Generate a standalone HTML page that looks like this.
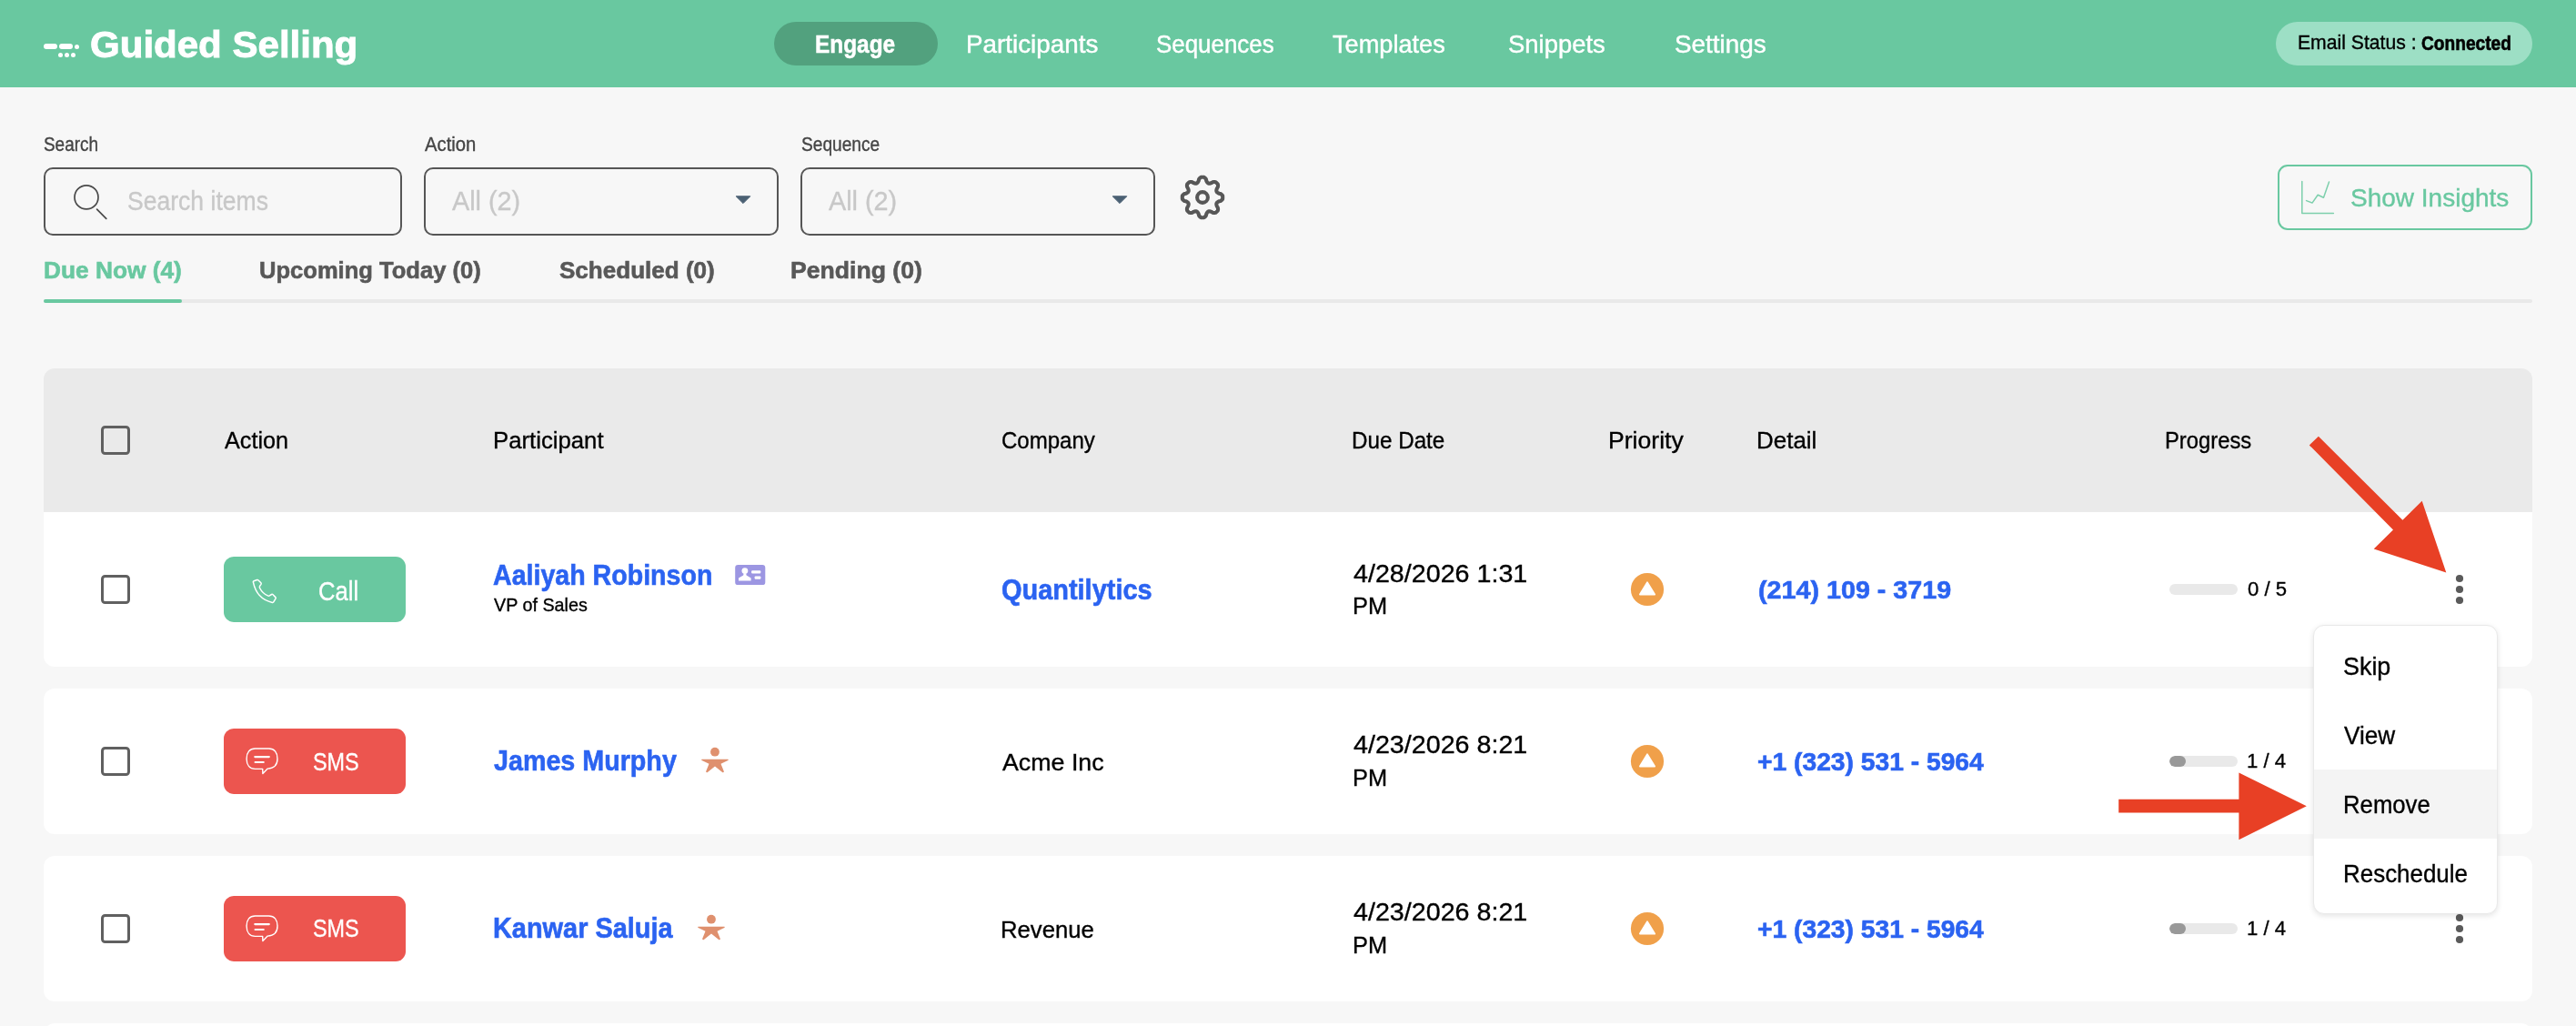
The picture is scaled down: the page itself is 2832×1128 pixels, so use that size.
<!DOCTYPE html>
<html lang="en">
<head>
<meta charset="utf-8">
<title>Guided Selling - Engage</title>
<style>
html,body{margin:0;padding:0}
body{width:2832px;height:1128px;overflow:hidden;background:#F7F7F7;font-family:"Liberation Sans",sans-serif;position:relative}
/* every piece is pinned to measured pixel coordinates of the 2832x1128 reference */
.a{position:absolute;display:block}
.t{position:absolute;display:block;white-space:nowrap;line-height:1;transform-origin:0 0}
header{position:absolute;left:0;top:0;width:2832px;height:96px;background:#69C8A0}
.pill{position:absolute;top:24px;height:48px;border-radius:24px}
.engage{left:851px;width:180px;background:#52A17E}
.status{left:2502px;width:282px;background:#9DDFC5}
.logo i{position:absolute;background:#fff;border-radius:3px;display:block}
.field{position:absolute;top:184px;height:71px;border:2px solid #565656;border-radius:10px;box-sizing:content-box}
.insights{position:absolute;left:2504px;top:181px;width:276px;height:68px;border:2px solid #69C8A0;border-radius:11px}
.tabline{position:absolute;left:48px;top:329px;width:2736px;height:4px;border-radius:2px;background:#E9E9E9}
.tabline b{position:absolute;left:0;top:0;width:152px;height:4px;border-radius:2px;background:#69C8A0;display:block}
.thead{position:absolute;left:48px;top:405px;width:2736px;height:158px;background:#EAEAEA;border-radius:12px 12px 0 0}
.row{position:absolute;left:48px;width:2736px;background:#fff;border-radius:12px}
.cb{position:absolute;width:26px;height:26px;border:3px solid #606060;border-radius:4.5px}
.btn{position:absolute;left:246px;width:200px;height:72px;border-radius:11px}
.call{background:#69C8A0}
.sms{background:#EC554F}
.pb{position:absolute;left:2385px;width:75px;height:12px;border-radius:6px;background:#E9E9E9;overflow:hidden}
.pf{height:12px;border-radius:6px;background:#999}
.menu{position:absolute;left:2543px;top:687px;width:201px;height:316px;background:#fff;border:1px solid #E9E9E9;border-radius:12px;box-shadow:0 2px 6px rgba(0,0,0,.11)}
.menu .hl{position:absolute;left:0;top:158px;width:201px;height:76px;background:#F4F4F4}
</style>
</head>
<body>

<!-- ===== top bar ===== -->
<header>
  <div class="logo">
    <i style="left:48px;top:48.3px;width:14.8px;height:5.5px"></i>
    <i style="left:64.9px;top:48.3px;width:14.8px;height:5.5px"></i>
    <i style="left:82px;top:48.6px;width:5px;height:5px"></i>
    <i style="left:64px;top:58.3px;width:4.8px;height:4.8px"></i>
    <i style="left:71.1px;top:58.3px;width:4.8px;height:4.8px"></i>
    <i style="left:78.4px;top:58.3px;width:4.8px;height:4.8px"></i>
    <span class="t" style="left:98.9px;top:29.0px;font-size:40.67px;color:#fff;transform:scaleX(1.034);font-weight:700;-webkit-text-stroke:0.9px #fff">Guided Selling</span>
  </div>
  <nav>
    <div class="pill engage"></div>
    <span class="t" style="left:896.1px;top:34.7px;font-size:27.6px;color:#fff;transform:scaleX(0.885);font-weight:700;-webkit-text-stroke:0.5px #fff">Engage</span>
<span class="t" style="left:1062.0px;top:34.7px;font-size:27.6px;color:#fff;transform:scaleX(1.008);-webkit-text-stroke:0.45px #fff">Participants</span>
<span class="t" style="left:1270.9px;top:34.7px;font-size:27.6px;color:#fff;transform:scaleX(0.939);-webkit-text-stroke:0.45px #fff">Sequences</span>
<span class="t" style="left:1465.4px;top:34.7px;font-size:27.6px;color:#fff;transform:scaleX(0.984);-webkit-text-stroke:0.45px #fff">Templates</span>
<span class="t" style="left:1657.7px;top:34.7px;font-size:27.6px;color:#fff;transform:scaleX(0.994);-webkit-text-stroke:0.45px #fff">Snippets</span>
<span class="t" style="left:1840.8px;top:34.7px;font-size:27.6px;color:#fff;transform:scaleX(1.011);-webkit-text-stroke:0.45px #fff">Settings</span>
  </nav>
  <div class="pill status"></div>
  <span class="t" style="left:2526.0px;top:36.3px;font-size:21.79px;color:#000;transform:scaleX(0.972);-webkit-text-stroke:0.35px #000">Email Status :</span>
<span class="t" style="left:2661.5px;top:37.3px;font-size:21.79px;color:#000;transform:scaleX(0.879);font-weight:700;-webkit-text-stroke:0.6px #000">Connected</span>
</header>

<!-- ===== filters ===== -->
<section>
  <div class="field" style="left:48px;width:390px"></div>
  <div class="field" style="left:466px;width:386px"></div>
  <div class="field" style="left:880px;width:386px"></div>
  <svg class="a" style="left:75px;top:197px" width="50" height="50" viewBox="0 0 50 50" fill="none" stroke="#4a4a4a" stroke-width="1.7" stroke-linecap="round">
    <circle cx="20" cy="19.9" r="13"/><path d="M31.6 33.2 L41.8 43.4"/>
  </svg>
  <svg class="a" style="left:806px;top:213px" width="22" height="14" viewBox="0 0 22 14"><path d="M3.2 2.8 H18.8 L11 10.6 Z" fill="#4A6073" stroke="#4A6073" stroke-width="1" stroke-linejoin="round"/></svg>
  <svg class="a" style="left:1220px;top:213px" width="22" height="14" viewBox="0 0 22 14"><path d="M3.2 2.8 H18.8 L11 10.6 Z" fill="#4A6073" stroke="#4A6073" stroke-width="1" stroke-linejoin="round"/></svg>
  <svg class="a" style="left:0;top:0" width="1400" height="260" viewBox="0 0 1400 260" fill="none" stroke="#575757" stroke-width="4.1" stroke-linejoin="round">
    <path d="M1322.00 194.80L1322.87 194.82L1323.74 194.89L1324.55 195.44L1325.29 196.20L1325.94 197.21L1326.34 198.91L1326.82 199.91L1327.32 200.64L1327.84 201.16L1328.42 201.50L1329.07 201.67L1329.81 201.67L1330.67 201.51L1331.72 201.13L1333.21 200.23L1334.38 199.96L1335.44 199.95L1336.40 200.14L1337.07 200.70L1337.70 201.30L1338.30 201.93L1338.86 202.60L1339.05 203.56L1339.04 204.62L1338.77 205.79L1337.87 207.28L1337.49 208.33L1337.33 209.19L1337.33 209.93L1337.50 210.58L1337.84 211.16L1338.36 211.68L1339.09 212.18L1340.09 212.66L1341.79 213.06L1342.80 213.71L1343.56 214.45L1344.11 215.26L1344.18 216.13L1344.20 217.00L1344.18 217.87L1344.11 218.74L1343.56 219.55L1342.80 220.29L1341.79 220.94L1340.09 221.34L1339.09 221.82L1338.36 222.32L1337.84 222.84L1337.50 223.42L1337.33 224.07L1337.33 224.81L1337.49 225.67L1337.87 226.72L1338.77 228.21L1339.04 229.38L1339.05 230.44L1338.86 231.40L1338.30 232.07L1337.70 232.70L1337.07 233.30L1336.40 233.86L1335.44 234.05L1334.38 234.04L1333.21 233.77L1331.72 232.87L1330.67 232.49L1329.81 232.33L1329.07 232.33L1328.42 232.50L1327.84 232.84L1327.32 233.36L1326.82 234.09L1326.34 235.09L1325.94 236.79L1325.29 237.80L1324.55 238.56L1323.74 239.11L1322.87 239.18L1322.00 239.20L1321.13 239.18L1320.26 239.11L1319.45 238.56L1318.71 237.80L1318.06 236.79L1317.66 235.09L1317.18 234.09L1316.68 233.36L1316.16 232.84L1315.58 232.50L1314.93 232.33L1314.19 232.33L1313.33 232.49L1312.28 232.87L1310.79 233.77L1309.62 234.04L1308.56 234.05L1307.60 233.86L1306.93 233.30L1306.30 232.70L1305.70 232.07L1305.14 231.40L1304.95 230.44L1304.96 229.38L1305.23 228.21L1306.13 226.72L1306.51 225.67L1306.67 224.81L1306.67 224.07L1306.50 223.42L1306.16 222.84L1305.64 222.32L1304.91 221.82L1303.91 221.34L1302.21 220.94L1301.20 220.29L1300.44 219.55L1299.89 218.74L1299.82 217.87L1299.80 217.00L1299.82 216.13L1299.89 215.26L1300.44 214.45L1301.20 213.71L1302.21 213.06L1303.91 212.66L1304.91 212.18L1305.64 211.68L1306.16 211.16L1306.50 210.58L1306.67 209.93L1306.67 209.19L1306.51 208.33L1306.13 207.28L1305.23 205.79L1304.96 204.62L1304.95 203.56L1305.14 202.60L1305.70 201.93L1306.30 201.30L1306.93 200.70L1307.60 200.14L1308.56 199.95L1309.62 199.96L1310.79 200.23L1312.28 201.13L1313.33 201.51L1314.19 201.67L1314.93 201.67L1315.58 201.50L1316.16 201.16L1316.68 200.64L1317.18 199.91L1317.66 198.91L1318.06 197.21L1318.71 196.20L1319.45 195.44L1320.26 194.89L1321.13 194.82Z"/><circle cx="1322" cy="217" r="5.9"/>
  </svg>
  <div class="insights">
    <svg class="a" style="left:18px;top:12px" width="50" height="44" viewBox="0 0 50 44" fill="none" stroke="#7DCFAC" stroke-width="1.5" stroke-linecap="round" stroke-linejoin="round">
      <path d="M6.8 4.6 V39.4 H41.4"/><path d="M11.6 25.6 L18 28.1 L24.2 19.3 L30.5 22.2 L36.5 4.9"/>
    </svg>
  </div>
  <span class="t" style="left:48.4px;top:148.0px;font-size:21.79px;color:#444444;transform:scaleX(0.869);-webkit-text-stroke:0.35px #444444">Search</span>
<span class="t" style="left:466.6px;top:148.0px;font-size:21.79px;color:#444444;transform:scaleX(0.931);-webkit-text-stroke:0.35px #444444">Action</span>
<span class="t" style="left:880.5px;top:148.0px;font-size:21.79px;color:#444444;transform:scaleX(0.878);-webkit-text-stroke:0.35px #444444">Sequence</span>
<span class="t" style="left:139.6px;top:207.3px;font-size:29.05px;color:#C8C8C8;transform:scaleX(0.914);-webkit-text-stroke:0.35px #C8C8C8">Search items</span>
<span class="t" style="left:496.9px;top:207.3px;font-size:29.05px;color:#C8C8C8;transform:scaleX(0.991);-webkit-text-stroke:0.35px #C8C8C8">All (2)</span>
<span class="t" style="left:910.8px;top:207.3px;font-size:29.05px;color:#C8C8C8;transform:scaleX(0.991);-webkit-text-stroke:0.35px #C8C8C8">All (2)</span>
<span class="t" style="left:2583.7px;top:203.6px;font-size:27.6px;color:#69C8A0;transform:scaleX(1.015);-webkit-text-stroke:0.35px #69C8A0">Show Insights</span>
</section>

<!-- ===== tabs ===== -->
<nav>
  <div class="tabline"><b></b></div>
  <span class="t" style="left:48.2px;top:283.5px;font-size:26.14px;color:#69C8A0;transform:scaleX(1.006);font-weight:700;-webkit-text-stroke:0.6px #69C8A0">Due Now (4)</span>
<span class="t" style="left:285.3px;top:283.5px;font-size:26.14px;color:#585858;transform:scaleX(0.978);font-weight:700;-webkit-text-stroke:0.6px #585858">Upcoming Today (0)</span>
<span class="t" style="left:614.6px;top:283.5px;font-size:26.14px;color:#585858;transform:scaleX(0.997);font-weight:700;-webkit-text-stroke:0.6px #585858">Scheduled (0)</span>
<span class="t" style="left:869.2px;top:283.5px;font-size:26.14px;color:#585858;transform:scaleX(1.018);font-weight:700;-webkit-text-stroke:0.6px #585858">Pending (0)</span>
</nav>

<!-- ===== work-queue table ===== -->
<main>
  <div class="thead"></div>
  <div class="cb" style="left:111px;top:468px"></div>
  <span class="t" style="left:247.0px;top:471.1px;font-size:26.14px;color:#000;transform:scaleX(0.964);-webkit-text-stroke:0.35px #000">Action</span>
<span class="t" style="left:542.4px;top:471.1px;font-size:26.14px;color:#000;transform:scaleX(0.985);-webkit-text-stroke:0.35px #000">Participant</span>
<span class="t" style="left:1100.5px;top:471.1px;font-size:26.14px;color:#000;transform:scaleX(0.920);-webkit-text-stroke:0.35px #000">Company</span>
<span class="t" style="left:1486.1px;top:471.1px;font-size:26.14px;color:#000;transform:scaleX(0.927);-webkit-text-stroke:0.35px #000">Due Date</span>
<span class="t" style="left:1768.3px;top:471.1px;font-size:26.14px;color:#000;transform:scaleX(1.018);-webkit-text-stroke:0.35px #000">Priority</span>
<span class="t" style="left:1931.4px;top:471.1px;font-size:26.14px;color:#000;transform:scaleX(0.994);-webkit-text-stroke:0.35px #000">Detail</span>
<span class="t" style="left:2380.0px;top:471.1px;font-size:26.14px;color:#000;transform:scaleX(0.911);-webkit-text-stroke:0.35px #000">Progress</span>

  <!-- row 1 : Call -->
  <article>
    <div class="row" style="top:563px;height:170px;border-radius:0 0 12px 12px"></div>
    <div class="cb" style="left:111px;top:632px"></div>
    <div class="btn call" style="top:612px">
      <svg class="a" style="left:19px;top:13px" width="50" height="50" viewBox="0 0 50 50" fill="none" stroke="#fff" stroke-width="1.5" stroke-linejoin="round">
        <path d="M13.4 15.2 Q13 14.2 14.2 13.8 L17.6 12.5 Q18.5 12.2 19.1 12.9 L21.9 15.8 Q22.5 16.5 22 17.3 L20.6 19.4 Q20 20.4 20.6 21.5 Q23.6 27.4 29.4 29.9 Q30.4 30.4 31.3 29.9 L33.6 28.5 Q34.4 28.1 35.1 28.8 L37.9 31.6 Q38.5 32.3 38 33.1 L35.9 36.7 Q35.4 37.6 34.4 37.4 Q17.4 33.8 13.4 15.2 Z"/>
      </svg>
    </div>
    <svg class="a" style="left:795px;top:610px;filter:blur(.75px)" width="60" height="45" viewBox="0 0 60 45">
      <rect x="13.2" y="11" width="33.1" height="22.1" rx="3.2" fill="#9C96E2"/>
      <circle cx="23.9" cy="17.6" r="3.4" fill="#fff"/>
      <path d="M22.6 20.5 H25.2 L25.6 22.4 L30.6 25.6 V28.6 H17 V25.6 L22.2 22.4 Z" fill="#fff"/>
      <rect x="31.1" y="17.3" width="10.2" height="3.3" rx="1" fill="#fff"/>
      <rect x="34.6" y="23.5" width="6.8" height="3.3" rx="1" fill="#fff"/>
    </svg>
    <svg class="a" style="left:1792px;top:628.9px;filter:blur(.65px)" width="38" height="38" viewBox="0 0 38 38"><circle cx="19" cy="19" r="18.1" fill="#F0A04A"/><path d="M19 11.4 L27 24.6 L11 24.6 Z" fill="#fff" stroke="#fff" stroke-width="2" stroke-linejoin="round"/></svg>
    <div class="pb" style="top:642.3px"></div>
    <svg class="a" style="left:2698px;top:630px" width="12" height="36" viewBox="0 0 12 36"><circle cx="6" cy="6" r="4.1" fill="#5a5a5a"/><circle cx="6" cy="18" r="4.1" fill="#5a5a5a"/><circle cx="6" cy="30" r="4.1" fill="#5a5a5a"/></svg>
    <span class="t" style="left:350.4px;top:635.7px;font-size:29.05px;color:#fff;transform:scaleX(0.883);-webkit-text-stroke:0.35px #fff">Call</span>
<span class="t" style="left:541.6px;top:616.5px;font-size:31.95px;color:#2B63F1;transform:scaleX(0.895);font-weight:700;-webkit-text-stroke:0.6px #2B63F1">Aaliyah Robinson</span>
<span class="t" style="left:542.5px;top:655.4px;font-size:20.33px;color:#000;transform:scaleX(0.971);-webkit-text-stroke:0.35px #000">VP of Sales</span>
<span class="t" style="left:1101.0px;top:632.9px;font-size:31.95px;color:#2B63F1;transform:scaleX(0.906);font-weight:700;-webkit-text-stroke:0.6px #2B63F1">Quantilytics</span>
<span class="t" style="left:1488.4px;top:617.4px;font-size:27.6px;color:#000;transform:scaleX(1.039);-webkit-text-stroke:0.35px #000">4/28/2026 1:31</span>
<span class="t" style="left:1486.5px;top:652.5px;font-size:26.14px;color:#000;transform:scaleX(0.971);-webkit-text-stroke:0.35px #000">PM</span>
<span class="t" style="left:1932.8px;top:634.8px;font-size:27.6px;color:#2B63F1;transform:scaleX(1.040);font-weight:700;-webkit-text-stroke:0.6px #2B63F1">(214) 109 - 3719</span>
<span class="t" style="left:2470.9px;top:636.0px;font-size:22.88px;color:#000;transform:scaleX(0.968);-webkit-text-stroke:0.35px #000">0 / 5</span>
  </article>

  <!-- row 2 : SMS -->
  <article>
    <div class="row" style="top:757px;height:160px"></div>
    <div class="cb" style="left:111px;top:821px"></div>
    <div class="btn sms" style="top:801px"><svg class="a" style="left:14px;top:9px" width="60" height="60" viewBox="0 0 60 60" fill="none" stroke="#fff"><path d="M28.7 35.4 L20.5 35.4 C14.5 35.4 11.1 31 11.1 24.2 C11.1 17.4 14.5 13 20.5 13 L35.6 13 C41.6 13 45 17.4 45 24.2 C45 30.5 41.5 34.6 34.2 35.1 L28.9 40.6 Z" stroke-width="1.4" stroke-linejoin="round"/><path d="M20.3 22.1 H35.8 M20.6 28 H29.7" stroke-width="2.2" stroke-linecap="round"/></svg></div>
    <svg class="a" style="left:760px;top:812px;filter:blur(.6px)" width="52" height="48" viewBox="0 0 52 48"><circle cx="25.96" cy="14.7" r="4.9" fill="#DF906E"/><path d="M11.6 22.7 L40.3 22.7 Q41.2 23.4 40.3 24 L32.5 27.8 L35.9 36.3 Q35.6 37.6 34.4 37.2 L26 30.5 L17.6 37.2 Q16.4 37.6 16.1 36.3 L19.5 27.8 L11.6 24 Q10.8 23.4 11.6 22.7 Z" fill="#DF906E"/></svg>
    <svg class="a" style="left:1792px;top:817.9px;filter:blur(.65px)" width="38" height="38" viewBox="0 0 38 38"><circle cx="19" cy="19" r="18.1" fill="#F0A04A"/><path d="M19 11.4 L27 24.6 L11 24.6 Z" fill="#fff" stroke="#fff" stroke-width="2" stroke-linejoin="round"/></svg>
    <div class="pb" style="top:830.9px"><div class="pf" style="width:18.0px"></div></div>
    <svg class="a" style="left:2698px;top:818.9px" width="12" height="36" viewBox="0 0 12 36"><circle cx="6" cy="6" r="4.1" fill="#5a5a5a"/><circle cx="6" cy="18" r="4.1" fill="#5a5a5a"/><circle cx="6" cy="30" r="4.1" fill="#5a5a5a"/></svg>
    <span class="t" style="left:344.4px;top:824.4px;font-size:27.6px;color:#fff;transform:scaleX(0.848);-webkit-text-stroke:0.35px #fff">SMS</span>
<span class="t" style="left:542.5px;top:821.4px;font-size:31.95px;color:#2B63F1;transform:scaleX(0.898);font-weight:700;-webkit-text-stroke:0.6px #2B63F1">James Murphy</span>
<span class="t" style="left:1101.9px;top:824.7px;font-size:26.14px;color:#000;transform:scaleX(1.025);-webkit-text-stroke:0.35px #000">Acme Inc</span>
<span class="t" style="left:1488.4px;top:805.3px;font-size:27.6px;color:#000;transform:scaleX(1.039);-webkit-text-stroke:0.35px #000">4/23/2026 8:21</span>
<span class="t" style="left:1486.5px;top:842.4px;font-size:26.14px;color:#000;transform:scaleX(0.971);-webkit-text-stroke:0.35px #000">PM</span>
<span class="t" style="left:1932.3px;top:824.4px;font-size:27.6px;color:#2B63F1;transform:scaleX(1.023);font-weight:700;-webkit-text-stroke:0.6px #2B63F1">+1 (323) 531 - 5964</span>
<span class="t" style="left:2469.9px;top:825.0px;font-size:22.88px;color:#000;transform:scaleX(0.968);-webkit-text-stroke:0.35px #000">1 / 4</span>
  </article>

  <!-- row 3 : SMS -->
  <article>
    <div class="row" style="top:941px;height:160px"></div>
    <div class="cb" style="left:111px;top:1004.7px"></div>
    <div class="btn sms" style="top:984.7px"><svg class="a" style="left:14px;top:9px" width="60" height="60" viewBox="0 0 60 60" fill="none" stroke="#fff"><path d="M28.7 35.4 L20.5 35.4 C14.5 35.4 11.1 31 11.1 24.2 C11.1 17.4 14.5 13 20.5 13 L35.6 13 C41.6 13 45 17.4 45 24.2 C45 30.5 41.5 34.6 34.2 35.1 L28.9 40.6 Z" stroke-width="1.4" stroke-linejoin="round"/><path d="M20.3 22.1 H35.8 M20.6 28 H29.7" stroke-width="2.2" stroke-linecap="round"/></svg></div>
    <svg class="a" style="left:755.6px;top:996.3px;filter:blur(.6px)" width="52" height="48" viewBox="0 0 52 48"><circle cx="25.96" cy="14.7" r="4.9" fill="#DF906E"/><path d="M11.6 22.7 L40.3 22.7 Q41.2 23.4 40.3 24 L32.5 27.8 L35.9 36.3 Q35.6 37.6 34.4 37.2 L26 30.5 L17.6 37.2 Q16.4 37.6 16.1 36.3 L19.5 27.8 L11.6 24 Q10.8 23.4 11.6 22.7 Z" fill="#DF906E"/></svg>
    <svg class="a" style="left:1792px;top:1001.7px;filter:blur(.65px)" width="38" height="38" viewBox="0 0 38 38"><circle cx="19" cy="19" r="18.1" fill="#F0A04A"/><path d="M19 11.4 L27 24.6 L11 24.6 Z" fill="#fff" stroke="#fff" stroke-width="2" stroke-linejoin="round"/></svg>
    <div class="pb" style="top:1014.7px"><div class="pf" style="width:18.0px"></div></div>
    <svg class="a" style="left:2698px;top:1002.7px" width="12" height="36" viewBox="0 0 12 36"><circle cx="6" cy="6" r="4.1" fill="#5a5a5a"/><circle cx="6" cy="18" r="4.1" fill="#5a5a5a"/><circle cx="6" cy="30" r="4.1" fill="#5a5a5a"/></svg>
    <span class="t" style="left:344.4px;top:1007.2px;font-size:27.6px;color:#fff;transform:scaleX(0.848);-webkit-text-stroke:0.35px #fff">SMS</span>
<span class="t" style="left:541.5px;top:1004.5px;font-size:31.95px;color:#2B63F1;transform:scaleX(0.905);font-weight:700;-webkit-text-stroke:0.6px #2B63F1">Kanwar Saluja</span>
<span class="t" style="left:1100.3px;top:1008.9px;font-size:26.14px;color:#000;transform:scaleX(0.983);-webkit-text-stroke:0.35px #000">Revenue</span>
<span class="t" style="left:1488.4px;top:989.1px;font-size:27.6px;color:#000;transform:scaleX(1.039);-webkit-text-stroke:0.35px #000">4/23/2026 8:21</span>
<span class="t" style="left:1486.5px;top:1026.2px;font-size:26.14px;color:#000;transform:scaleX(0.971);-webkit-text-stroke:0.35px #000">PM</span>
<span class="t" style="left:1932.3px;top:1007.6px;font-size:27.6px;color:#2B63F1;transform:scaleX(1.023);font-weight:700;-webkit-text-stroke:0.6px #2B63F1">+1 (323) 531 - 5964</span>
<span class="t" style="left:2469.9px;top:1008.8px;font-size:22.88px;color:#000;transform:scaleX(0.968);-webkit-text-stroke:0.35px #000">1 / 4</span>
  </article>

  <!-- row 4 (only its top edge is inside the viewport) -->
  <div class="row" style="top:1125px;height:160px"></div>
</main>

<!-- ===== row action menu (open on row 1) ===== -->
<div class="menu"><div class="hl"></div></div>
<span class="t" style="left:2575.7px;top:719.4px;font-size:27.6px;color:#000;transform:scaleX(0.975);-webkit-text-stroke:0.35px #000">Skip</span>
<span class="t" style="left:2577.0px;top:794.6px;font-size:27.6px;color:#000;transform:scaleX(0.948);-webkit-text-stroke:0.35px #000">View</span>
<span class="t" style="left:2575.5px;top:870.6px;font-size:27.6px;color:#000;transform:scaleX(0.932);-webkit-text-stroke:0.35px #000">Remove</span>
<span class="t" style="left:2575.5px;top:946.6px;font-size:27.6px;color:#000;transform:scaleX(0.940);-webkit-text-stroke:0.35px #000">Reschedule</span>

<!-- ===== red annotation arrows ===== -->
<svg class="a" style="left:0;top:0" width="2832" height="1128" viewBox="0 0 2832 1128">
  <path d="M2548.9 479.8 L2641.4 571.8 L2662.7 550.7 L2689.3 629.5 L2609.7 603.4 L2631 582.4 L2538.8 489.4 Z" fill="#E84025"/>
  <path d="M2329.2 878.8 H2461.4 V849.6 L2535.8 886.2 L2461.4 923.3 V893.5 H2329.2 Z" fill="#E84025"/>
</svg>

</body>
</html>
